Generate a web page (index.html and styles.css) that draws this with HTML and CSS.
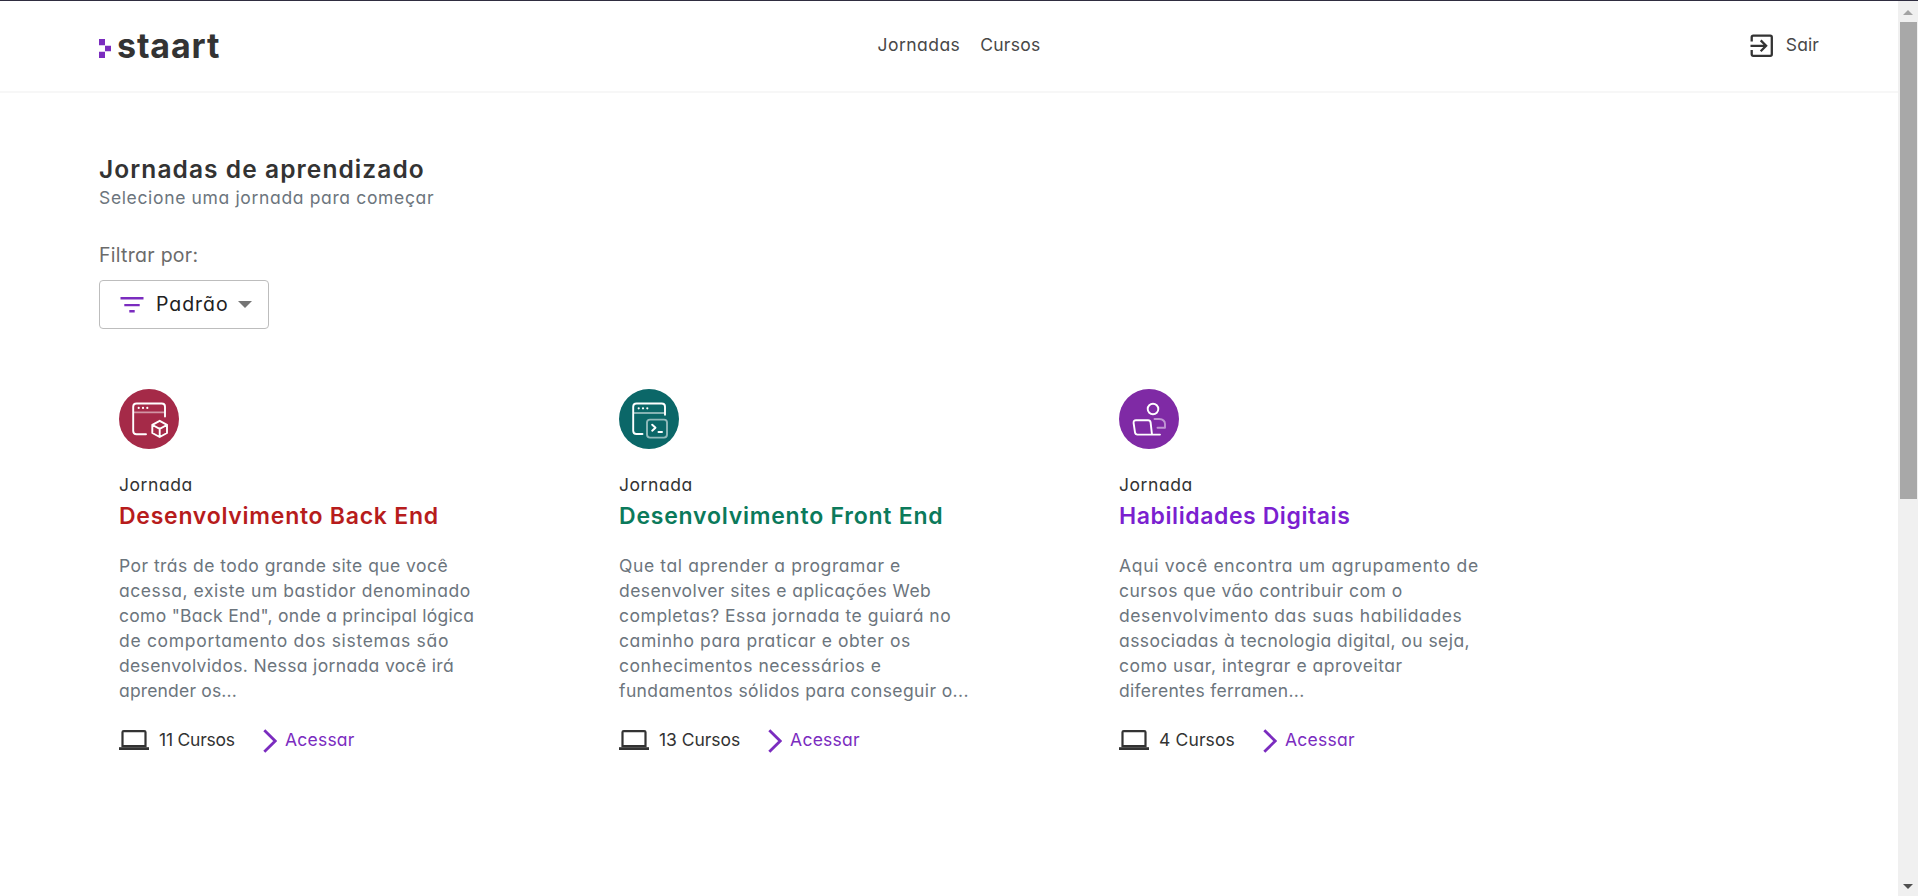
FILE: index.html
```html
<!DOCTYPE html>
<html lang="pt-BR">
<head>
<meta charset="utf-8">
<title>Staart - Jornadas de aprendizado</title>
<link rel="stylesheet" href="styles.css">
</head>
<body>
<div class="page">
  <header class="header">
    <div class="header-inner">
      <a class="logo">
        <svg class="logo-mark" width="12" height="19" viewBox="0 0 12 19" fill="#7b2cbf"><path d="M0 0h6v6.3H0zM6 6.7h6v5.6H6zM0 12.7h6V19H0z"/></svg>
        <span class="logo-text">staart</span>
      </a>
      <nav class="nav"><a class="nav-j">Jornadas</a><a class="nav-c">Cursos</a></nav>
      <a class="exit">
        <svg width="24" height="24" viewBox="0 0 24 24" fill="none" stroke="#333" stroke-width="2.3"><path d="M1.7 7.5V3.2Q1.7 1.7 3.2 1.7H20.3Q21.8 1.7 21.8 3.2V20.3Q21.8 21.8 20.3 21.8H3.2Q1.7 21.8 1.7 20.3V16"/><path d="M.5 11.8H16M10.7 6.4l5.4 5.4-5.4 5.4"/></svg>
        <span>Sair</span>
      </a>
    </div>
  </header>
  <main class="main">
    <h1 class="title">Jornadas de aprendizado</h1>
    <p class="subtitle">Selecione uma jornada para começar</p>
    <p class="filter-label">Filtrar por:</p>
    <button class="select">
      <svg width="24" height="16" viewBox="0 0 24 16" fill="#7b2cbf"><path d="M.5 0H23.5V2.4H.5zM4.3 7H19.7V9.2H4.3zM9.3 13H14.7V15.4H9.3z"/></svg>
      <span class="select-text">Padrão</span>
      <svg class="caret" width="14" height="7" viewBox="0 0 14 7"><path d="M0 0h14L7 7z" fill="#757575"/></svg>
    </button>
    <section class="cards">
      <article class="card back">
        <svg class="badge" width="60" height="60" viewBox="0 0 60 60" fill="none" stroke="#fff" stroke-width="1.9" stroke-linecap="round" stroke-linejoin="round">
          <circle cx="30" cy="30" r="30" fill="#a52a48" stroke="none"/>
          <path d="M15 23.4H45" stroke-opacity=".5"/>
          <path d="M27 45.2H17.5Q14.2 45.2 14.2 42V17.7Q14.2 14.5 17.5 14.5H42.7Q46 14.5 46 17.7V27.5"/>
          <path d="M19.7 18.9h.01M24 18.9h.01M28.3 18.9h.01" stroke-width="2.2"/>
          <path d="M40.7 31.8L48 35.8V44L40.7 48L33.3 44V35.8ZM33.5 36L40.7 39.8L47.8 36M40.7 39.8V47.8"/>
        </svg>
        <p class="kind">Jornada</p>
        <h2 class="name">Desenvolvimento Back End</h2>
        <p class="desc"><span>Por trás de todo grande site que você</span><span>acessa, existe um bastidor denominado</span><span>como "Back End", onde a principal lógica</span><span>de comportamento dos sistemas são</span><span>desenvolvidos. Nessa jornada você irá</span><span>aprender os...</span></p>
        <div class="foot">
          <svg class="laptop" width="30" height="20" viewBox="0 0 30 20"><path d="M4.7 1.1H25.3Q26.5 1.1 26.5 2.3V16.2H3.5V2.3Q3.5 1.1 4.7 1.1Z" fill="none" stroke="#333" stroke-width="2.2"/><path d="M0 17.2H30V20H0z" fill="#333"/></svg>
          <span class="count">11 Cursos</span>
          <svg class="chev" width="14" height="24" viewBox="0 0 14 24"><path d="M1.3 1.2L12.2 12L1.3 22.8" fill="none" stroke="#7b2cbf" stroke-width="2.8"/></svg>
          <a class="go">Acessar</a>
        </div>
      </article>
      <article class="card front">
        <svg class="badge" width="60" height="60" viewBox="0 0 60 60" fill="none" stroke="#fff" stroke-width="1.9" stroke-linecap="round" stroke-linejoin="round">
          <circle cx="30" cy="30" r="30" fill="#0b6768" stroke="none"/>
          <path d="M15 24H45" stroke-opacity=".5"/>
          <path d="M23.5 45H17.5Q14.2 45 14.2 41.7V17.7Q14.2 14.5 17.5 14.5H42.7Q46 14.5 46 17.7V25.8"/>
          <path d="M19.7 19.3h.01M24 19.3h.01M28.3 19.3h.01" stroke-width="2.2"/>
          <rect x="28" y="30.6" width="20" height="18" rx="3" stroke-opacity=".55"/>
          <path d="M33.2 35.7L36.5 38.7L33.2 41.7M39.5 43H43" stroke-width="2"/>
        </svg>
        <p class="kind">Jornada</p>
        <h2 class="name">Desenvolvimento Front End</h2>
        <p class="desc"><span>Que tal aprender a programar e</span><span>desenvolver sites e aplicações Web</span><span>completas? Essa jornada te guiará no</span><span>caminho para praticar e obter os</span><span>conhecimentos necessários e</span><span>fundamentos sólidos para conseguir o...</span></p>
        <div class="foot">
          <svg class="laptop" width="30" height="20" viewBox="0 0 30 20"><path d="M4.7 1.1H25.3Q26.5 1.1 26.5 2.3V16.2H3.5V2.3Q3.5 1.1 4.7 1.1Z" fill="none" stroke="#333" stroke-width="2.2"/><path d="M0 17.2H30V20H0z" fill="#333"/></svg>
          <span class="count">13 Cursos</span>
          <svg class="chev" width="14" height="24" viewBox="0 0 14 24"><path d="M1.3 1.2L12.2 12L1.3 22.8" fill="none" stroke="#7b2cbf" stroke-width="2.8"/></svg>
          <a class="go">Acessar</a>
        </div>
      </article>
      <article class="card digital">
        <svg class="badge" width="60" height="60" viewBox="0 0 60 60" fill="none" stroke="#fff" stroke-width="1.9" stroke-linecap="round" stroke-linejoin="round">
          <circle cx="30" cy="30" r="30" fill="#7f2aa5" stroke="none"/>
          <circle cx="34" cy="20" r="5.3"/>
          <path d="M35.5 30H40Q46 30.3 46 35V38.7H38.5" stroke-opacity=".5"/>
          <path d="M41 45.6H18.5Q16.3 45.6 16 43.4L14.6 34Q14.4 31.3 17 31.3H29Q31.3 31.3 31.6 33.5L33 45.6"/>
        </svg>
        <p class="kind">Jornada</p>
        <h2 class="name">Habilidades Digitais</h2>
        <p class="desc"><span>Aqui você encontra um agrupamento de</span><span>cursos que vão contribuir com o</span><span>desenvolvimento das suas habilidades</span><span>associadas à tecnologia digital, ou seja,</span><span>como usar, integrar e aproveitar</span><span>diferentes ferramen...</span></p>
        <div class="foot">
          <svg class="laptop" width="30" height="20" viewBox="0 0 30 20"><path d="M4.7 1.1H25.3Q26.5 1.1 26.5 2.3V16.2H3.5V2.3Q3.5 1.1 4.7 1.1Z" fill="none" stroke="#333" stroke-width="2.2"/><path d="M0 17.2H30V20H0z" fill="#333"/></svg>
          <span class="count">4 Cursos</span>
          <svg class="chev" width="14" height="24" viewBox="0 0 14 24"><path d="M1.3 1.2L12.2 12L1.3 22.8" fill="none" stroke="#7b2cbf" stroke-width="2.8"/></svg>
          <a class="go">Acessar</a>
        </div>
      </article>
    </section>
  </main>
</div>
<aside class="scrollbar">
  <svg width="10" height="5" viewBox="0 0 10 5"><path d="M0 5h10L5 0z" fill="#a3a3a3"/></svg>
  <div class="thumb"></div>
  <svg class="down" width="10" height="5" viewBox="0 0 10 5"><path d="M0 0h10L5 5z" fill="#505050"/></svg>
</aside>
</body>
</html>
```
FILE: styles.css
```css
* { box-sizing: border-box; }
body {
  margin: 0;
  height: 896px;
  display: flex;
  overflow: hidden;
  background: #fff;
  border-top: 1px solid #2f2d40;
  font: 400 17.5px/25px Inter, sans-serif;
  font-feature-settings: "cv11";
  color: #333;
}
h1, h2, p { margin: 0; }
svg { display: block; flex: none; }
.page { flex: 1; }

.header { height: 92px; border-bottom: 2px solid #f7f7f7; padding: 0 79px 0 99px; }
.header-inner { display: grid; grid-template-columns: 1fr auto 1fr; align-items: start; }
.logo { display: flex; padding-top: 25px; }
.logo-mark { margin-top: 13px; }
.logo-text {
  margin-left: 6px;
  font-size: 34px;
  font-weight: 700;
  line-height: 40px;
  letter-spacing: .85px;
  font-feature-settings: normal;
}
.nav { display: flex; gap: 20px; padding-top: 31px; color: #484848; }
.nav-j { letter-spacing: .45px; }
.nav-c { letter-spacing: .25px; }
.exit { justify-self: end; display: flex; gap: 12px; padding-top: 31px; color: #484848; letter-spacing: .1px; }
.exit svg { margin-top: 2px; }

.main { padding: 61px 0 0 99px; }
.title {
  font-size: 24.5px;
  font-weight: 600;
  line-height: 30px;
  letter-spacing: 1.08px;
  font-feature-settings: normal;
}
.subtitle { margin-top: 1px; color: #6c757d; letter-spacing: .65px; }
.filter-label { margin-top: 32px; font-size: 19.5px; line-height: 26px; color: #6b6b6b; letter-spacing: .28px; }
.select {
  margin-top: 12px;
  width: 170px;
  height: 49px;
  display: flex;
  align-items: center;
  padding: 0 16px 0 20px;
  background: #fff;
  border: 1px solid #bdbdbd;
  border-radius: 4px;
  font: inherit;
  color: #212121;
}
.select-text { margin-left: 12px; font-size: 19.5px; letter-spacing: .95px; }
.caret { margin-left: auto; }

.cards { display: grid; grid-template-columns: repeat(3, 500px); margin: 60px 0 0 20px; }
.kind { margin-top: 23px; letter-spacing: .55px; }
.name {
  margin-top: 4px;
  font-size: 23px;
  font-weight: 600;
  line-height: 30px;
  letter-spacing: .74px;
  font-feature-settings: normal;
}
.back .name { color: #b71c1c; }
.front .name { color: #0b7a5b; letter-spacing: .78px; }
.digital .name { color: #7b1fd0; letter-spacing: .58px; }
.desc { margin-top: 22px; color: #6c757d; }
.desc span { display: block; white-space: nowrap; }

.back span:nth-child(1) { letter-spacing: .45px; }
.back span:nth-child(2) { letter-spacing: .56px; }
.back span:nth-child(3) { letter-spacing: .28px; }
.back span:nth-child(4) { letter-spacing: .69px; }
.back span:nth-child(5) { letter-spacing: .35px; }
.back span:nth-child(6) { letter-spacing: .17px; }
.front span:nth-child(1) { letter-spacing: .61px; }
.front span:nth-child(2) { letter-spacing: .44px; }
.front span:nth-child(3) { letter-spacing: .52px; }
.front span:nth-child(4) { letter-spacing: .59px; }
.front span:nth-child(5) { letter-spacing: .55px; }
.front span:nth-child(6) { letter-spacing: .4px; }
.digital span:nth-child(1) { letter-spacing: .7px; }
.digital span:nth-child(2) { letter-spacing: .5px; }
.digital span:nth-child(3) { letter-spacing: .6px; }
.digital span:nth-child(4) { letter-spacing: .43px; }
.digital span:nth-child(5) { letter-spacing: .54px; }
.digital span:nth-child(6) { letter-spacing: .3px; }

.foot { display: flex; margin-top: 24px; white-space: nowrap; }
.laptop { margin-top: 3px; }
.back .foot .count { margin-left: 10px; letter-spacing: -.22px; }
.front .foot .count { margin-left: 10px; letter-spacing: -.05px; }
.digital .foot .count { margin-left: 10px; letter-spacing: .13px; }
.chev { margin: 2px 0 0 28px; }
.go { margin-left: 8px; color: #7b2cbf; letter-spacing: .25px; }

.scrollbar {
  width: 20px;
  display: flex;
  flex-direction: column;
  align-items: center;
  background: #f0f0f0;
  padding: 9px 0 7px;
}
.thumb { width: 17px; height: 477px; margin-top: 7px; background: #a8a8a8; }
.down { margin-top: auto; }
```
